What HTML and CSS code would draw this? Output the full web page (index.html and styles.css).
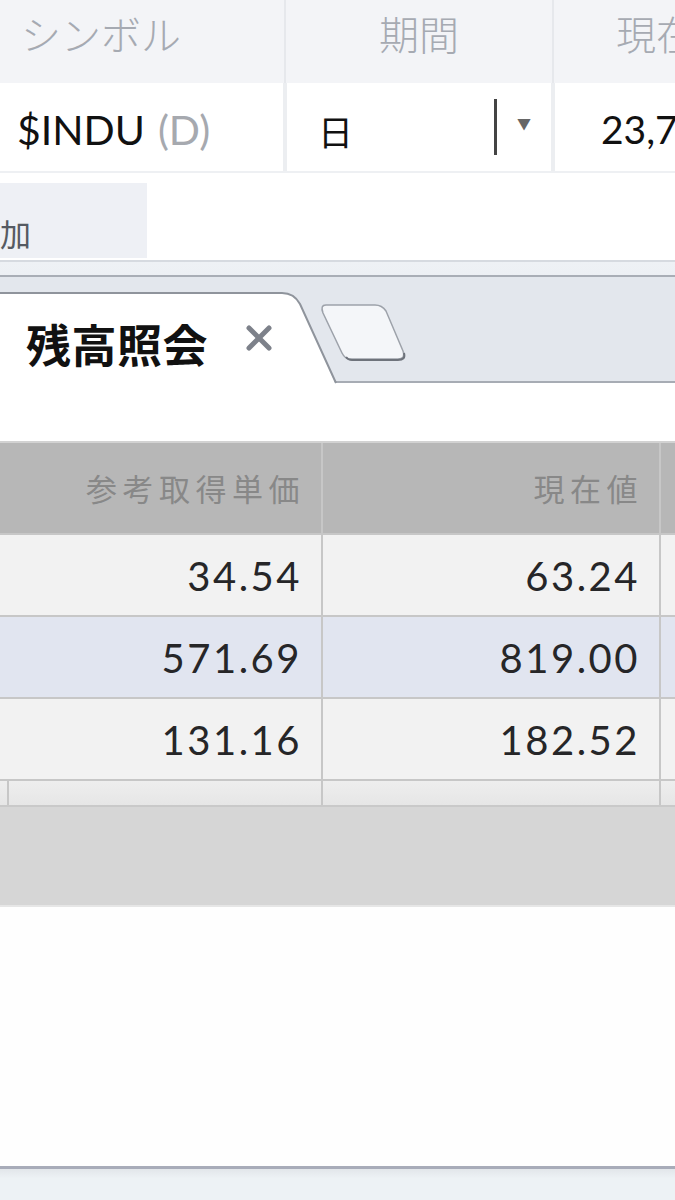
FILE: index.html
```html
<!DOCTYPE html>
<html lang="ja">
<head>
<meta charset="utf-8">
<link rel="stylesheet" href="styles.css">
</head>
<body>
<div class="page">
  <div class="watch">
    <div class="wl-head">
      <div class="wl-h wl-h-sym">シンボル</div>
      <div class="wl-h wl-h-per">期間</div>
      <div class="wl-h wl-h-cur">現在値</div>
    </div>
    <div class="wl-row">
      <div class="wl-c wl-sym"><span class="sym">$INDU</span><span class="sym-d">(D)</span></div>
      <div class="wl-c wl-per">
        <span class="per-val">日</span>
        <span class="per-sep"></span>
        <span class="per-arrow">▼</span>
      </div>
      <div class="wl-c wl-cur">23,7</div>
    </div>
  </div>
  <div class="addline">
    <div class="addbtn"><span class="addtxt">追加</span></div>
  </div>
  <div class="tabstrip">
    <div class="tabrow">
      <div class="tab">
        <svg class="tab-bg" width="340" height="93" viewBox="0 0 340 93">
          <path d="M0 1 H282 Q294 1 300 12 L336 93 H0 Z" fill="#ffffff"/>
          <path d="M0 1 H282 Q294 1 300 12 L336 91" fill="none" stroke="#8f949c" stroke-width="2"/>
        </svg>
        <span class="tab-title">残高照会</span>
        <svg class="tab-close" width="26" height="26" viewBox="0 0 26 26">
          <path d="M3 3 L23 23 M23 3 L3 23" stroke="#7d818a" stroke-width="5" stroke-linecap="round"/>
        </svg>
      </div>
      <svg class="newtab" width="88" height="62" viewBox="0 0 88 62">
        <path d="M6 4 H55 Q62 4 66 10 L83 50 Q86 58 78 58 H30 Q25 58 22 52 L3 12 Q0 4 6 4 Z" fill="#f4f6f9" stroke="#9da2aa" stroke-width="1.5"/>
        <path d="M26 56 Q28 59 32 59 H78 Q86 59 84 52" fill="none" stroke="#6e737b" stroke-width="2"/>
      </svg>
    </div>
  </div>
  <div class="gap"></div>
  <div class="tbl">
    <div class="th"></div>
    <div class="th"><span>参考取得単価</span></div>
    <div class="th"><span>現在値</span></div>
    <div class="th"></div>

    <div class="td"></div>
    <div class="td num">34.54</div>
    <div class="td num">63.24</div>
    <div class="td"></div>

    <div class="td sel"></div>
    <div class="td sel num">571.69</div>
    <div class="td sel num">819.00</div>
    <div class="td sel"></div>

    <div class="td"></div>
    <div class="td num">131.16</div>
    <div class="td num">182.52</div>
    <div class="td"></div>

    <div class="tf"></div>
    <div class="tf"></div>
    <div class="tf"></div>
    <div class="tf"></div>
  </div>
  <div class="graybar"></div>
  <div class="filler"></div>
  <div class="bottombar"></div>
</div>
</body>
</html>
```
FILE: styles.css
```css
* { box-sizing: border-box; }
html, body { margin: 0; padding: 0; background: #ffffff; }
body { font-family: "Noto Sans CJK JP", "Noto Sans", sans-serif; overflow: hidden; }
.page { width: 675px; height: 1200px; display: flex; flex-direction: column; overflow: hidden; }

.watch { background: #e6e8ec; }
.wl-head { display: grid; grid-template-columns: 284px 266px 1fr; column-gap: 2px; height: 83px; }
.wl-h { background: #f3f4f7; color: #a6aab2; font-size: 40px; font-weight: 300; display: flex; align-items: center; white-space: nowrap; overflow: hidden; padding-bottom: 18px; }
.wl-h-sym { padding-left: 21px; }
.wl-h-per { justify-content: center; padding-right: 0; }
.wl-h-cur { padding-left: 62px; }

.wl-row { display: grid; grid-template-columns: 283px 264px 1fr; column-gap: 4px; height: 88px; background: #eceef1; }
.wl-c { background: #ffffff; display: flex; align-items: center; white-space: nowrap; overflow: hidden; }
.wl-sym { padding-left: 17px; font-family: "Lato", "Noto Sans", sans-serif; font-size: 41px; padding-top: 4px; }
.sym { color: #111111; }
.sym-d { color: #a6a9af; margin-left: 13px; }
.wl-per { padding-left: 31px; padding-top: 6px; }
.per-val { font-size: 35px; color: #111; flex: 1; }
.per-sep { width: 3px; height: 56px; background: #444; margin-right: 20px; margin-top: -6px; }
.per-arrow { font-size: 14px; color: #666; margin-right: 20px; margin-top: -14px; }
.wl-cur { padding-left: 46px; font-family: "Lato", "Noto Sans", sans-serif; font-size: 39px; color: #111; padding-top: 4px; }

.addline { border-top: 2px solid #eef0f3; padding-top: 10px; height: 89px; background: #ffffff; }
.addbtn { width: 147px; height: 75px; background: #eef0f5; display: flex; align-items: center; overflow: hidden; padding-top: 24px; }
.addtxt { font-size: 31px; color: #555a62; margin-left: -31px; white-space: nowrap; }

.tabstrip { border-top: 2px solid #d6dae0; background: linear-gradient(#eef1f5, #e3e7ec); padding-top: 13px; }
.tabrow { border-top: 2px solid #a9aeb6; border-bottom: 2px solid #a7acb4; background: #e3e7ed; height: 108px; display: flex; align-items: flex-start; }
.tab { position: relative; width: 318px; height: 91px; margin-top: 15px; display: flex; align-items: center; padding-left: 26px; padding-top: 12px; }
.tab-bg { position: absolute; left: 0; top: 0; }
.tab-title { position: relative; font-size: 45px; font-weight: 700; color: #111; letter-spacing: 0.5px; }
.tab-close { position: relative; margin-left: 38px; margin-top: -12px; }
.newtab { margin-left: 2px; margin-top: 24px; }

.gap { height: 58px; background: #ffffff; }

.tbl { display: grid; grid-template-columns: 7px 312px 336px 1fr; grid-template-rows: 90px 80px 80px 80px 24px; gap: 2px; background: #c7c7c7; border-top: 2px solid #d2d2d2; border-bottom: 2px solid #c9c9c9; }
.th { background: #b7b7b7; color: #888888; font-size: 31px; letter-spacing: 5.5px; display: flex; align-items: center; justify-content: flex-end; padding-right: 16px; padding-bottom: 2px; white-space: nowrap; }
.td { background: #f2f2f2; display: flex; align-items: center; justify-content: flex-end; padding-right: 20px; }
.td.sel { background: #e1e5f0; }
.num { font-family: "Lato", "Noto Sans", sans-serif; font-size: 40px; color: #262628; letter-spacing: 2.5px; padding-right: 19px; padding-top: 2px; }
.tf { background: linear-gradient(#eeeeee, #e6e6e6); }

.graybar { height: 100px; background: #d6d6d6; border-bottom: 2px solid #e6e6e6; }
.filler { flex: 1; background: #fefefe; }
.bottombar { height: 34px; border-top: 3px solid #a8acb9; background: linear-gradient(#e2e6ea, #edf2f5 30%); }
```
